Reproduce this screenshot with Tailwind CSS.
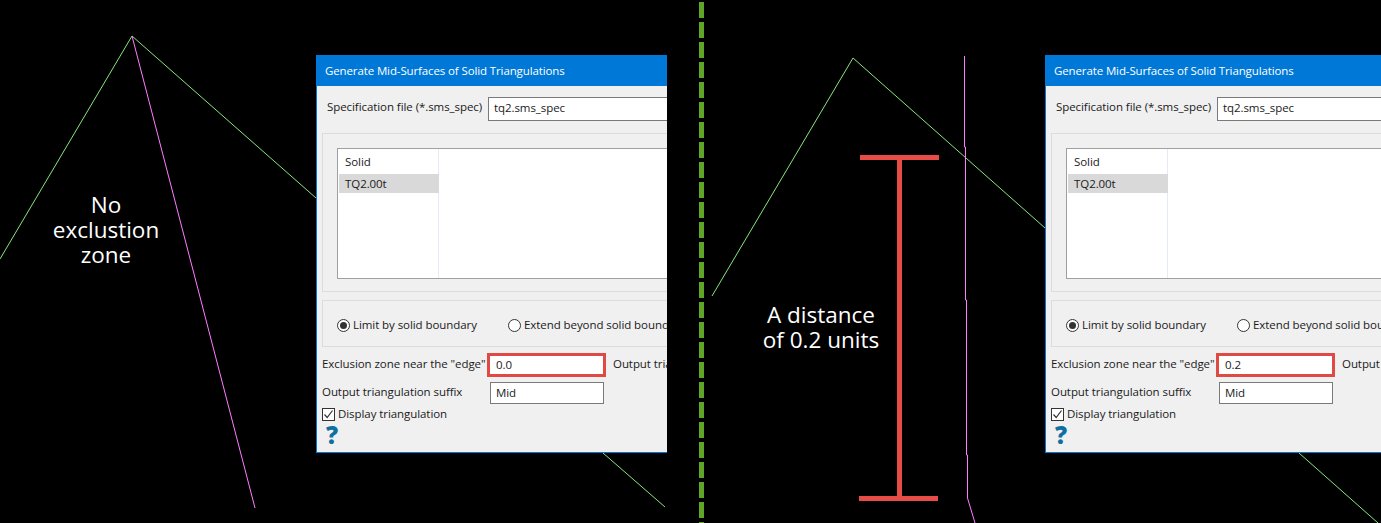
<!doctype html>
<html>
<head>
<meta charset="utf-8">
<title>Exclusion zone comparison</title>
<script src="https://cdn.jsdelivr.net/npm/@tailwindcss/browser@4"></script>
</head>
<body class="bg-black">
<div class="relative w-[1381px] h-[523px] bg-black overflow-hidden font-['Open_Sans',sans-serif] text-[11.5px] tracking-[-0.07px] text-[#1a1a1a]">

    <!-- wireframe lines, behind the dialogs -->
    <svg class="absolute left-0 top-0" width="1381" height="523" fill="none">
        <polyline points="0,259 132,36 316,198" stroke="#86e67c" stroke-width="1"/>
        <line x1="603" y1="453" x2="665" y2="507" stroke="#86e67c" stroke-width="1"/>
        <line x1="132" y1="36" x2="255" y2="508" stroke="#ff7cff" stroke-width="1"/>
        <polyline points="712,296 853,58 1045,228" stroke="#86e67c" stroke-width="1"/>
        <line x1="1299" y1="453" x2="1378" y2="523" stroke="#86e67c" stroke-width="1"/>
        <polyline points="964.5,56 964.5,147 965.5,147 965.5,300 966.5,300 966.5,455 967.5,455 967.5,498 975,523" stroke="#ff7cff" stroke-width="1"/>
        <line x1="701.5" y1="2" x2="701.5" y2="523" stroke="#5fa528" stroke-width="5" stroke-dasharray="16 4"/>
    </svg>

    <!-- left panel -->
    <div class="absolute left-0 top-0 w-[667px] h-[523px] overflow-hidden">
        <div class="absolute left-[26px] top-[192px] w-[160px] text-center text-white text-[22.5px] tracking-normal leading-[25px]">No<br>exclustion<br>zone</div>

        <div class="absolute left-[316px] top-[55px] w-[560px] h-[398px] border-l border-b border-[#0078d7] bg-[#f0f0f0]">
            <div class="h-[31px] bg-[#0078d7] pl-[8px] flex items-center text-white tracking-[-0.12px]">Generate Mid-Surfaces of Solid Triangulations</div>
            <div class="pl-[5px]">
                <div class="flex items-center mt-[11px] pl-[5px] h-[24px]">
                    <span class="w-[161px] whitespace-nowrap -mt-[4px]">Specification file (*.sms_spec)</span>
                    <div class="flex-1 h-full border border-[#7a7a7a] bg-white pl-[5px] pb-[3px] flex items-center">tq2.sms_spec</div>
                </div>
                <div class="mt-[12px] h-[159px] border border-[#dcdcdc] pl-[14px] pt-[14px]">
                    <div class="h-[131px] border border-[#a0a0a0] bg-white pl-px">
                        <div class="w-[100px] h-full border-r border-[#e3ecf5]">
                            <div class="h-[25px] pl-[6px] flex items-center">Solid</div>
                            <div class="w-[100px] h-[19px] pl-[6px] flex items-center bg-[#d9d9d9]">TQ2.00t</div>
                        </div>
                    </div>
                </div>
                <div class="mt-[8px] h-[47px] border border-[#dcdcdc] pl-[14px] pt-[3px] flex items-center whitespace-nowrap">
                    <span class="w-[13px] h-[13px] rounded-full border border-[#333333] bg-white flex items-center justify-center"><span class="w-[7px] h-[7px] rounded-full bg-[#333333]"></span></span>
                    <span class="ml-[3px] w-[155px] -mt-[1px]">Limit by solid boundary</span>
                    <span class="w-[13px] h-[13px] rounded-full border border-[#333333] bg-white"></span>
                    <span class="ml-[3px] -mt-[1px]">Extend beyond solid boundary</span>
                </div>
                <div class="flex items-center mt-[6px] h-[24px] whitespace-nowrap">
                    <span class="w-[165px] -mt-[3px]">Exclusion zone near the "edge"</span>
                    <div class="w-[119px] h-full border-[3px] border-[#e04a45] bg-white pl-[6px] flex items-center">0.0</div>
                    <span class="ml-[7px] -mt-[3px]">Output triangulation</span>
                </div>
                <div class="flex items-center mt-[5px] h-[22px] whitespace-nowrap">
                    <span class="w-[168px] -mt-[3px]">Output triangulation suffix</span>
                    <div class="w-[114px] h-full border border-[#7a7a7a] bg-white pl-[5px] flex items-center">Mid</div>
                </div>
                <div class="flex items-center mt-[4px] h-[13px] whitespace-nowrap">
                    <span class="w-[13px] h-[13px] border border-[#333333] bg-white flex items-center justify-center">
                        <svg width="11" height="11" viewBox="0 0 11 11" fill="none"><path d="M1.5 5.5 L4.2 8.5 L9.5 1.5" stroke="#333333" stroke-width="1.2"/></svg>
                    </span>
                    <span class="ml-[3px] -mt-[1px]">Display triangulation</span>
                </div>
                <div class="mt-[2px] pl-[4px] h-[24px] flex items-center text-[#0e6fa1] text-[24px] font-extrabold">?</div>
            </div>
        </div>
    </div>

    <!-- right panel -->
    <div class="absolute left-[729px] top-0 w-[652px] h-[523px] overflow-hidden">
        <div class="absolute left-[316px] top-[55px] w-[560px] h-[398px] border-l border-b border-[#0078d7] bg-[#f0f0f0]">
            <div class="h-[31px] bg-[#0078d7] pl-[8px] flex items-center text-white tracking-[-0.12px]">Generate Mid-Surfaces of Solid Triangulations</div>
            <div class="pl-[5px]">
                <div class="flex items-center mt-[11px] pl-[5px] h-[24px]">
                    <span class="w-[161px] whitespace-nowrap -mt-[4px]">Specification file (*.sms_spec)</span>
                    <div class="flex-1 h-full border border-[#7a7a7a] bg-white pl-[5px] pb-[3px] flex items-center">tq2.sms_spec</div>
                </div>
                <div class="mt-[12px] h-[159px] border border-[#dcdcdc] pl-[14px] pt-[14px]">
                    <div class="h-[131px] border border-[#a0a0a0] bg-white pl-px">
                        <div class="w-[100px] h-full border-r border-[#e3ecf5]">
                            <div class="h-[25px] pl-[6px] flex items-center">Solid</div>
                            <div class="w-[100px] h-[19px] pl-[6px] flex items-center bg-[#d9d9d9]">TQ2.00t</div>
                        </div>
                    </div>
                </div>
                <div class="mt-[8px] h-[47px] border border-[#dcdcdc] pl-[14px] pt-[3px] flex items-center whitespace-nowrap">
                    <span class="w-[13px] h-[13px] rounded-full border border-[#333333] bg-white flex items-center justify-center"><span class="w-[7px] h-[7px] rounded-full bg-[#333333]"></span></span>
                    <span class="ml-[3px] w-[155px] -mt-[1px]">Limit by solid boundary</span>
                    <span class="w-[13px] h-[13px] rounded-full border border-[#333333] bg-white"></span>
                    <span class="ml-[3px] -mt-[1px]">Extend beyond solid boundary</span>
                </div>
                <div class="flex items-center mt-[6px] h-[24px] whitespace-nowrap">
                    <span class="w-[165px] -mt-[3px]">Exclusion zone near the "edge"</span>
                    <div class="w-[119px] h-full border-[3px] border-[#e04a45] bg-white pl-[6px] flex items-center">0.2</div>
                    <span class="ml-[7px] -mt-[3px]">Output triangulation</span>
                </div>
                <div class="flex items-center mt-[5px] h-[22px] whitespace-nowrap">
                    <span class="w-[168px] -mt-[3px]">Output triangulation suffix</span>
                    <div class="w-[114px] h-full border border-[#7a7a7a] bg-white pl-[5px] flex items-center">Mid</div>
                </div>
                <div class="flex items-center mt-[4px] h-[13px] whitespace-nowrap">
                    <span class="w-[13px] h-[13px] border border-[#333333] bg-white flex items-center justify-center">
                        <svg width="11" height="11" viewBox="0 0 11 11" fill="none"><path d="M1.5 5.5 L4.2 8.5 L9.5 1.5" stroke="#333333" stroke-width="1.2"/></svg>
                    </span>
                    <span class="ml-[3px] -mt-[1px]">Display triangulation</span>
                </div>
                <div class="mt-[2px] pl-[4px] h-[24px] flex items-center text-[#0e6fa1] text-[24px] font-extrabold">?</div>
            </div>
        </div>
    </div>

    <!-- distance marker -->
    <svg class="absolute left-[855px] top-[150px]" width="90" height="356" fill="none">
        <path d="M5 7.5 H84 M44.5 5 V348 M4 348.5 H83" stroke="#e84c47" stroke-width="5"/>
    </svg>
    <div class="absolute left-[741px] top-[302px] w-[160px] text-center text-white text-[22.5px] tracking-normal leading-[25px]">A distance<br>of 0.2 units</div>
</div>
</body>
</html>
